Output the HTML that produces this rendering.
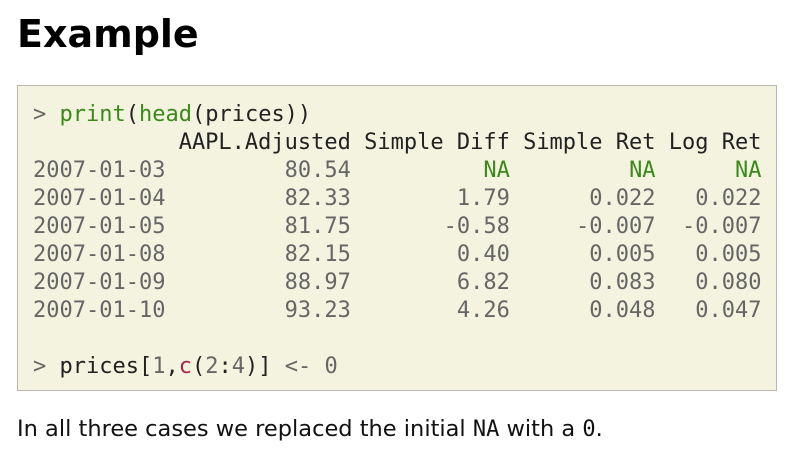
<!DOCTYPE html>
<html><head><style>
body{margin:0;background:#fff;width:808px;height:464px;overflow:hidden}
h1{position:absolute;left:17px;top:12px;margin:0;font:bold 38px "DejaVu Sans","Liberation Sans",sans-serif;color:#000}
.box{position:absolute;left:17px;top:85px;width:760px;height:306px;box-sizing:border-box;border:1px solid #b8b8b0;background:#f4f3df}
pre{margin:0;position:absolute;left:15px;top:15px;font:22px/28px "DejaVu Sans Mono",monospace;color:#222}
.g{color:#666}.f{color:#3a8a1a}.r{color:#a3264a}
p{position:absolute;left:17px;top:416px;margin:0;font:22.5px "DejaVu Sans","Liberation Sans",sans-serif;color:#111}
code{font:22px "DejaVu Sans Mono",monospace}
</style></head><body>
<h1>Example</h1>
<div class="box"><pre><span class="g">&gt;</span> <span class="f">print</span>(<span class="f">head</span>(prices))
           AAPL.Adjusted Simple Diff Simple Ret Log Ret
<span class="g">2007-01-03         80.54          <span class="f">NA</span>         <span class="f">NA</span>      <span class="f">NA</span>
2007-01-04         82.33        1.79      0.022   0.022
2007-01-05         81.75       -0.58     -0.007  -0.007
2007-01-08         82.15        0.40      0.005   0.005
2007-01-09         88.97        6.82      0.083   0.080
2007-01-10         93.23        4.26      0.048   0.047</span>

<span class="g">&gt;</span> prices[<span class="g">1</span>,<span class="r">c</span>(<span class="g">2</span>:<span class="g">4</span>)] <span class="g">&lt;- 0</span></pre></div>
<p>In all three cases we replaced the initial <code>NA</code> with a <code>0</code>.</p>
</body></html>
